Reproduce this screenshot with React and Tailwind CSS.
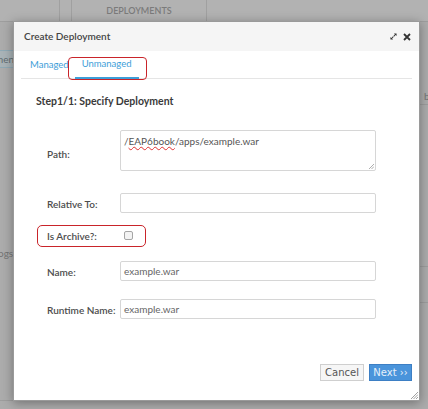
import React from 'react'

const Field = ({ label, children, className = '', labelClass = 'pt-[3px]' }) => (
  <div className={`flex items-center ${className}`}>
    <p className={`w-[84px] pl-[11px] whitespace-nowrap text-[10px] font-semibold text-[#4d4d4d] ${labelClass}`}>{label}</p>
    {children}
  </div>
)

const App = () => {
  return (
    <div
      className="relative w-[428px] h-[409px] overflow-hidden bg-[#acacac]"
      style={{ fontFamily: 'Lato, "Open Sans", "Liberation Sans", sans-serif' }}
    >
      {/* Dimmed page behind */}
      <div className="flex h-[22px] border-b border-[#9e9e9e] bg-[#b2b2b2]">
        <div className="w-[60px] border-r border-[#a0a0a0]" />
        <div className="w-[12px] border-r border-[#a0a0a0]" />
        <div className="w-[135px] border-r border-[#a0a0a0] flex items-center justify-center text-[9px] font-semibold text-[#7b7b7b]">
          DEPLOYMENTS
        </div>
      </div>
      <div className="absolute left-[-6px] top-[50px] h-[18px] w-[20px] overflow-hidden border border-[#8fa9b5] bg-[#a9b3b7] text-[10px] leading-[16px] text-[#5f6b70]">
        men
      </div>
      <p className="absolute left-[-2px] top-[246px] text-[10px] text-[#757575]">ogs</p>
      <p className="absolute right-[-4px] top-[89px] text-[10px] text-[#757575]">bl</p>
      <div className="absolute right-0 top-[104px] h-px w-[10px] bg-[#9d9d9d]" />
      <div className="absolute right-0 top-[266px] h-px w-[10px] bg-[#9d9d9d]" />
      <div className="absolute right-0 top-[302px] h-px w-[10px] bg-[#9d9d9d]" />
      <div className="absolute left-0 top-[400px] h-px w-[60px] bg-[#9d9d9d]" />

      {/* Modal */}
      <div className="absolute left-[13px] top-[21px] w-[407px] h-[380px] flex flex-col bg-white border border-[#9a9a9a] shadow-[0_2px_10px_rgba(0,0,0,0.35)]">
        <div className="flex items-center justify-between h-[29px] bg-[#f5f5f5] pl-[10px] pr-[8px]">
          <p className="text-[10px] font-semibold text-[#444]">Create Deployment</p>
          <div className="flex items-center gap-[6px] text-[#333]">
            <svg width="7" height="7" viewBox="0 0 8 8" fill="#333">
              <path d="M4.5 0.5 H7.5 V3.5 L6.4 2.4 L4.6 4.2 L3.8 3.4 L5.6 1.6 Z" />
              <path d="M3.5 7.5 H0.5 V4.5 L1.6 5.6 L3.4 3.8 L4.2 4.6 L2.4 6.4 Z" />
            </svg>
            <svg width="8" height="8" viewBox="0 0 8 8" stroke="#333" strokeWidth="1.8">
              <path d="M1 1 L7 7 M7 1 L1 7" />
            </svg>
          </div>
        </div>

        <div className="px-[7px]">
          <div className="flex items-end h-[28px] border-b border-[#e5e5e5] text-[9.5px] text-[#3e9ed8]">
            <div className="pl-[9px] pr-[6px] pb-[6px]">Managed</div>
            <div className="relative px-[7px] pb-[6px] border-b-2 border-[#3e9ed8] -mb-px">
              Unmanaged
              <div className="absolute left-[-7px] bottom-[-3px] w-[79px] h-[23px] rounded-[4px] border border-[#c9242a]" />
            </div>
          </div>
        </div>

        <p className="mt-[15px] ml-[22px] text-[10.5px] font-bold text-[#3a3a3a]">Step1/1: Specify Deployment</p>

        <div className="ml-[22px] mt-[20px] flex flex-col">
          <Field label="Path:" labelClass="pt-[8px]">
            <div className="relative w-[256px] h-[41px] rounded-[2px] border border-[#d6d6d6] px-[3px] pt-[4px] text-[10px] leading-[13px] text-[#555]">
              /<span className="underline decoration-wavy decoration-[#e03030] decoration-[1px]">EAP6book</span>/apps/example.war
              <svg className="absolute right-[1px] bottom-[1px]" width="6" height="6" viewBox="0 0 6 6" stroke="#999" strokeWidth="0.8">
                <path d="M1 6 L6 1 M3.5 6 L6 3.5" />
              </svg>
            </div>
          </Field>

          <Field label="Relative To:" className="mt-[22px]">
            <div className="w-[256px] h-[20px] rounded-[2px] border border-[#d6d6d6]" />
          </Field>

          <div className="relative mt-[12px] h-[22px] flex items-center">
            <div className="absolute left-[1px] top-0 w-[109px] h-[22px] rounded-[5px] border border-[#c9242a]" />
            <p className="w-[84px] pl-[11px] pt-[2px] whitespace-nowrap text-[10px] font-semibold text-[#4d4d4d]">Is Archive?:</p>
            <div className="ml-[4px] w-[9px] h-[9px] rounded-[2px] border border-[#a5a5a5] bg-[#f3f3f3]" />
          </div>

          <Field label="Name:" className="mt-[14px]">
            <div className="w-[256px] h-[20px] rounded-[2px] border border-[#d6d6d6] px-[3px] text-[10px] leading-[18px] text-[#666]">
              example.war
            </div>
          </Field>

          <Field label="Runtime Name:" className="mt-[18px]">
            <div className="w-[256px] h-[20px] rounded-[2px] border border-[#d6d6d6] px-[3px] text-[10px] leading-[18px] text-[#666]">
              example.war
            </div>
          </Field>
        </div>

        <div className="mt-auto mb-[19px] mr-[7px] flex justify-end gap-[5px]">
          <button className="w-[44px] h-[17px] border border-[#cfcfcf] bg-[#f6f6f6] text-[10px] text-[#555]" style={{ fontFamily: '"DejaVu Sans", sans-serif' }}>Cancel</button>
          <button className="w-[43px] h-[17px] border border-[#3d7fc4] bg-[#4a94db] text-[10px] text-[#e6f0fa]" style={{ fontFamily: '"DejaVu Sans", sans-serif' }}>Next ››</button>
        </div>

        <svg className="absolute right-[1px] bottom-[1px]" width="8" height="8" viewBox="0 0 8 8" stroke="#888" strokeWidth="0.8">
          <path d="M1 8 L8 1 M3.5 8 L8 3.5 M6 8 L8 6" />
        </svg>
      </div>
    </div>
  )
}

export default App
